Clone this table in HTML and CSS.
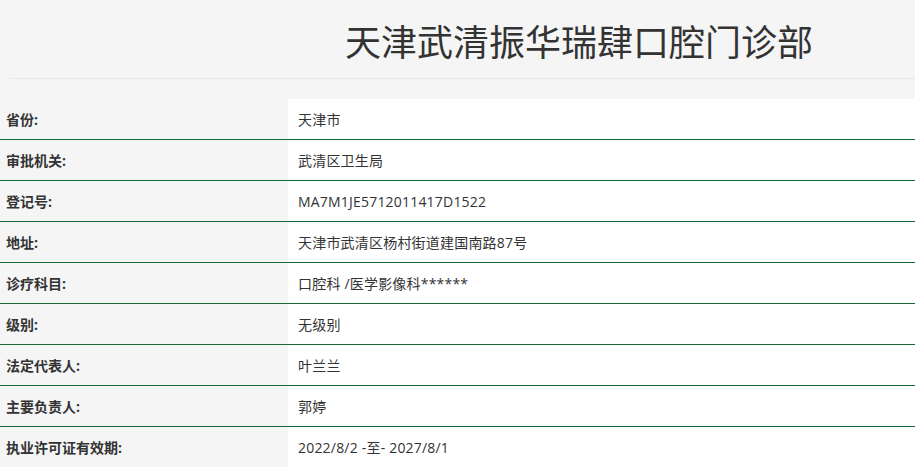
FILE: index.html
```html
<!DOCTYPE html>
<html lang="zh">
<head>
<meta charset="utf-8">
<title>天津武清振华瑞肆口腔门诊部</title>
<link rel="stylesheet" href="styles.css">
</head>
<body>
<header class="header">
  <h1 class="title">天津武清振华瑞肆口腔门诊部</h1>
</header>
<div class="info">
  <div class="row"><div class="label">省份:</div><div class="value">天津市</div></div>
  <div class="row"><div class="label">审批机关:</div><div class="value">武清区卫生局</div></div>
  <div class="row"><div class="label">登记号:</div><div class="value">MA7M1JE5712011417D1522</div></div>
  <div class="row"><div class="label">地址:</div><div class="value">天津市武清区杨村街道建国南路87号</div></div>
  <div class="row"><div class="label">诊疗科目:</div><div class="value">口腔科 /医学影像科******</div></div>
  <div class="row"><div class="label">级别:</div><div class="value">无级别</div></div>
  <div class="row"><div class="label">法定代表人:</div><div class="value">叶兰兰</div></div>
  <div class="row"><div class="label">主要负责人:</div><div class="value">郭婷</div></div>
  <div class="row"><div class="label">执业许可证有效期:</div><div class="value">2022/8/2 -至- 2027/8/1</div></div>
</div>
</body>
</html>
```
FILE: styles.css
```css
html, body {
  margin: 0;
  padding: 0;
  background: #f5f5f5;
  color: #333;
  font-family: "Open Sans", "Noto Sans CJK SC", sans-serif;
  font-size: 14px;
}
.header {
  margin-left: 10px;
  height: 78px;
  border-bottom: 1px solid #e8e8e8;
  display: flex;
  align-items: center;
}
.title {
  margin: 0;
  padding-left: 335px;
  font-family: "Noto Sans CJK SC", sans-serif;
  font-size: 36px;
  font-weight: 400;
  color: #333;
  line-height: 1;
  position: relative;
  top: 1px;
}
.info {
  margin-top: 20px;
  display: flex;
  flex-direction: column;
}
.row {
  display: flex;
  height: 40px;
  border-bottom: 1px solid #17663a;
}
.label {
  width: 282px;
  padding-left: 6px;
  display: flex;
  align-items: center;
  font-weight: 700;
  background: #f5f5f5;
}
.value {
  flex: 1;
  padding-left: 10px;
  display: flex;
  align-items: center;
  background: #fff;
  letter-spacing: 0.2px;
}
```
